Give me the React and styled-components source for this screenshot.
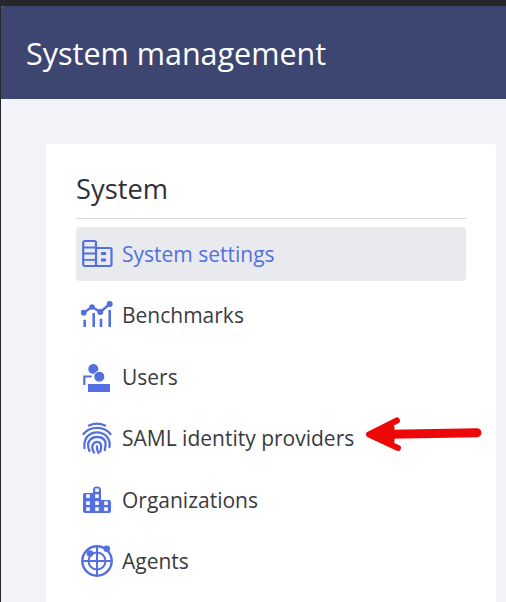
import styled, { createGlobalStyle } from "styled-components";

const GlobalStyle = createGlobalStyle`
  html, body {
    margin: 0;
    padding: 0;
    height: 100%;
    overflow: hidden;
    background: #26272b;
  }
  #root {
    height: 100%;
  }
`;

const Frame = styled.div`
  position: relative;
  height: 100%;
  padding: 6px 0 0 1px;
  box-sizing: border-box;
  overflow: hidden;
  font-family: "Open Sans", sans-serif;
`;

const Window = styled.div`
  height: 100%;
  background: #f2f3f8;
  border-top-left-radius: 3px;
  overflow: hidden;
`;

const Header = styled.header`
  height: 93px;
  box-sizing: border-box;
  padding: 0 25px;
  display: flex;
  align-items: center;
  background: #3d4670;
  color: #ffffff;
  font-size: 30.5px;
  line-height: 36px;
`;

const Body = styled.main`
  padding: 45px 10px 0 45px;
`;

const Card = styled.section`
  background: #ffffff;
  padding: 26px 30px 0;
  height: 500px;
`;

const Title = styled.h2`
  margin: 0;
  padding-bottom: 11px;
  border-bottom: 1px solid #d9d9dc;
  color: #2f3136;
  font-size: 27.3px;
  line-height: 37px;
  font-weight: 400;
`;

const Menu = styled.ul`
  list-style: none;
  margin: 8px 0 0;
  padding: 0;
  display: flex;
  flex-direction: column;
  gap: 7.4px;
`;

const Item = styled.li`
  height: 54px;
  box-sizing: border-box;
  padding-left: 5px;
  display: flex;
  align-items: center;
  gap: 9px;
  border-radius: 4px;
  background: ${(props) => (props.$active ? "#e9eaed" : "transparent")};
  color: ${(props) => (props.$active ? "#5470e0" : "#3a3b40")};
  font-size: 21px;
`;

const Icon = styled.svg`
  width: 32px;
  height: 32px;
  flex: none;
  color: #5470e0;
`;

const Arrow = styled.svg`
  position: absolute;
  left: 362px;
  top: 412px;
  width: 124px;
  height: 44px;
`;

const SettingsIcon = () => (
  <Icon viewBox="0 0 32 32" fill="none" stroke="currentColor" strokeWidth="2.2" strokeLinejoin="round">
    <path d="M2.200 4.500a1.500 1.500 0 0 1 1.500-1.500h9.800a1.500 1.500 0 0 1 1.500 1.500V28H3.700a1.500 1.500 0 0 1-1.500-1.500z" />
    <path d="M15 10h14a1.500 1.500 0 0 1 1.500 1.500v15A1.500 1.500 0 0 1 29 28H15" />
    <path d="M2.200 9.500H15M2.200 15.500H15M2.200 21.800H15" strokeWidth="1.800" />
    <path d="M20 15.500h5M20 22h5" strokeWidth="2.800" />
  </Icon>
);

const BenchmarksIcon = () => (
  <Icon viewBox="0 0 32 32" fill="none" stroke="currentColor">
    <path d="M2.700 13.700L11 8l8.300 5 9.400-8" strokeWidth="2.400" />
    <circle cx="2.700" cy="13.700" r="3" fill="currentColor" stroke="none" />
    <circle cx="11" cy="8" r="2.800" fill="currentColor" stroke="none" />
    <circle cx="19.300" cy="13" r="3" fill="currentColor" stroke="none" />
    <circle cx="28.700" cy="5" r="3" fill="currentColor" stroke="none" />
    <path d="M3.700 20.700V28M12.700 14V28M20 19.700V28M28.700 11V28" strokeWidth="2.600" />
  </Icon>
);

const UsersIcon = () => (
  <Icon viewBox="0 0 32 32" fill="none">
    <circle cx="12.300" cy="8" r="5" fill="currentColor" />
    <circle cx="18.300" cy="15.700" r="5.500" fill="currentColor" stroke="#fff" strokeWidth="1" />
    <path d="M3.300 24v-8.500h7.400" stroke="currentColor" strokeWidth="2.200" />
    <rect x="7" y="23" width="22" height="8" fill="currentColor" />
  </Icon>
);

const FingerprintIcon = () => (
  <Icon viewBox="0 0 32 32" fill="none" stroke="currentColor" strokeWidth="2.300" strokeLinecap="round">
    <path d="M8 3.500C13 1.200 19 1.200 24 3.500" />
    <path d="M2.500 12C6 7.300 11 5.800 16 5.800S26 7.300 29.500 12" />
    <path d="M3.500 26C2.300 16.500 8 10.300 16 10.300S29.700 16.500 28.500 25" />
    <path d="M8.500 29C6.500 24 7 21 8 19.500 9.500 16.500 12.500 15 16 15s7 1.500 8.300 4.500c.7 2.500.3 5.500-.5 8.500" />
    <path d="M13 30.500C11 27 11 24 12 22.500c1-1.800 2.500-2.700 4-2.700s3.500 1.200 4 3.200c.3 2 0 4-.7 6.500" />
    <path d="M16 24.500c-.3 2.500.5 4.500 1.500 6.500" />
  </Icon>
);

const OrganizationsIcon = () => (
  <Icon viewBox="0 0 32 32" fill="none">
    <path
      d="M3.500 9H12V6a3.500 3.500 0 0 1 3.500-3.500h1A3.500 3.500 0 0 1 20 6v10h8a2 2 0 0 1 2 2v9a2 2 0 0 1-2 2H4a2 2 0 0 1-2-2V10.500A1.500 1.500 0 0 1 3.500 9z"
      fill="currentColor"
    />
    <g fill="#fff">
      <rect x="14.200" y="4.500" width="3.600" height="3.400" />
      <rect x="5.200" y="10.300" width="3.600" height="3.600" />
      <rect x="14.200" y="10.300" width="3.600" height="3.600" />
      <rect x="5.200" y="17.300" width="3.600" height="3.600" />
      <rect x="14.200" y="17.300" width="3.600" height="3.600" />
      <rect x="23.200" y="17.300" width="3.600" height="3.600" />
      <rect x="5.200" y="23.300" width="3.600" height="3.600" />
      <rect x="14.200" y="23.300" width="3.600" height="3.600" />
      <rect x="23.200" y="23.300" width="3.600" height="3.600" />
    </g>
  </Icon>
);

const AgentsIcon = () => (
  <Icon viewBox="0 0 32 32" fill="none" stroke="currentColor" strokeWidth="2">
    <circle cx="16" cy="16" r="14.700" strokeWidth="2.400" />
    <circle cx="16" cy="16" r="8.500" />
    <path d="M16 1.500v29M1.500 16h29" />
    <circle cx="9" cy="8.500" r="3.300" fill="currentColor" stroke="none" />
    <circle cx="25.700" cy="3.700" r="3.300" fill="currentColor" stroke="none" />
  </Icon>
);

const items = [
  { label: "System settings", icon: SettingsIcon, active: true },
  { label: "Benchmarks", icon: BenchmarksIcon },
  { label: "Users", icon: UsersIcon },
  { label: "SAML identity providers", icon: FingerprintIcon },
  { label: "Organizations", icon: OrganizationsIcon },
  { label: "Agents", icon: AgentsIcon },
];

export default function App() {
  return (
    <>
      <GlobalStyle />
      <Frame>
        <Window>
          <Header>System management</Header>
          <Body>
            <Card>
              <Title>System</Title>
              <Menu>
                {items.map(({ label, icon: ItemIcon, active }) => (
                  <Item key={label} $active={active}>
                    <ItemIcon />
                    {label}
                  </Item>
                ))}
              </Menu>
            </Card>
          </Body>
        </Window>
        <Arrow viewBox="0 0 124 44" fill="none" stroke="#ec0808" strokeLinecap="round" strokeLinejoin="round">
          <path d="M115 20.700L14 22.500" strokeWidth="9" />
          <path d="M35 8.500L7 22.500 36 36" strokeWidth="6" />
          <path d="M7 22.500L31 15V30z" fill="#ec0808" strokeWidth="3" />
        </Arrow>
      </Frame>
    </>
  );
}
